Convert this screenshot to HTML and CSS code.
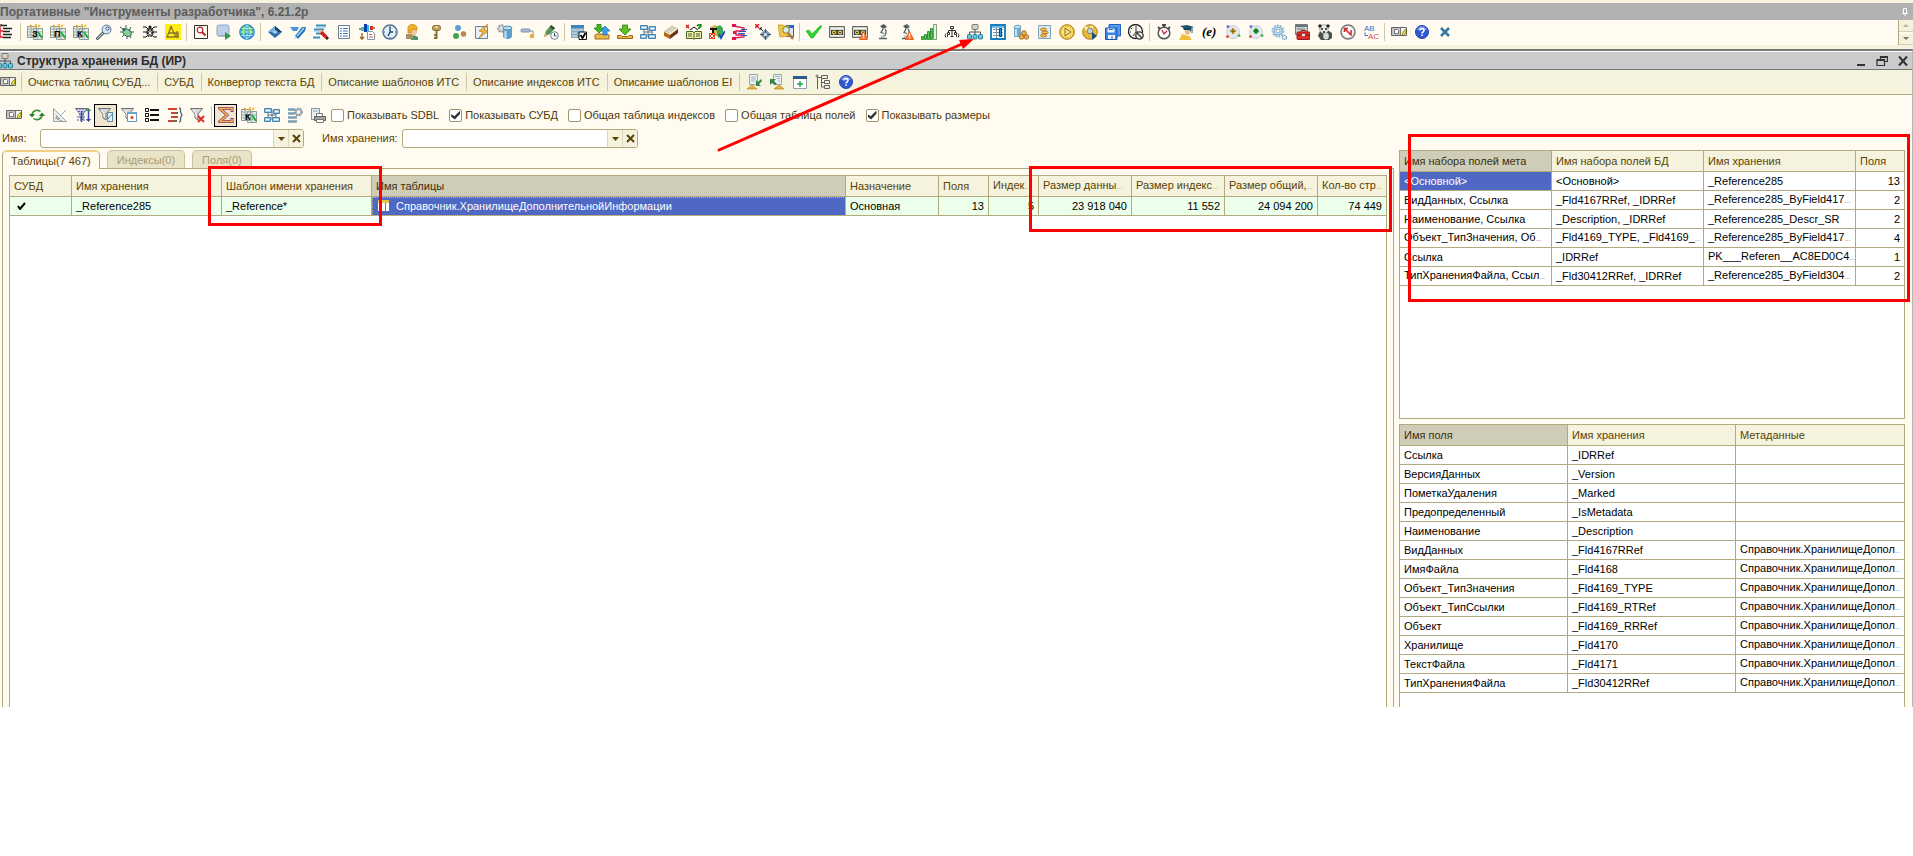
FILE: index.html
```html
<!DOCTYPE html>
<html lang="ru">
<head>
<meta charset="utf-8">
<title>Структура хранения БД (ИР)</title>
<link rel="stylesheet" href="styles.css">
</head>
<body>
<svg class="sprite" aria-hidden="true">
<symbol id="tree-list" viewBox="0 0 16 16"><path d="M4 1.500h6M6 4.500h9M6 7.500h7M6 10.500h9M6 13.500h8M4 0v2" stroke="#222" stroke-width="1.300"/><path d="M3 2v12M3 7h3M3 13h3" stroke="#e0253c" stroke-width="1.500"/></symbol>
<symbol id="grid" viewBox="0 0 16 16"><path d="M.5 2.500h9v11h-9z M6.500 4.500h9v11h-9z" fill="#e8eeea" stroke="#8d9b96"/><path d="M1 5h8M1 8h8M1 11h8M4 3v10M11 5v10M7 8h8M7 12h8" stroke="#9caaa5"/><path d="M3 1l3 2M9 0v3M13 1l-2 2" stroke="#f0a818" stroke-width="1.500"/><path d="M11 8l4 6" stroke="#19b436" stroke-width="2"/></symbol>
<symbol id="key-blue" viewBox="0 0 16 16"><path d="M1.500 14.500L8 8" stroke="#56646e" stroke-width="3" stroke-linecap="round"/><path d="M1.500 14.500L8 8" stroke="#cfdbe2" stroke-width="1"/><circle cx="10.500" cy="5.500" r="4.500" fill="#cfe2f0" stroke="#5b7c98"/><circle cx="11.500" cy="4.500" r="1.500" fill="#fff" stroke="#39566e"/></symbol>
<symbol id="bug-green" viewBox="0 0 16 16"><path d="M1 3l4 3M7 1v4M12 3l-2 4M1 8h4M15 8h-4M3 13l3-3M12 14l-2-4M8 15v-4" stroke="#30605c"/><ellipse cx="8.500" cy="8.500" rx="4.500" ry="3.300" fill="#8fce93" stroke="#2b6a55" transform="rotate(35 8 8)"/><circle cx="5" cy="5.500" r="1.500" fill="#30605c"/></symbol>
<symbol id="bug-black" viewBox="0 0 16 16"><path d="M1 3h3l2 2M15 3h-3l-2 2M1 8h4M15 8h-4M1 13h3l2-2M15 13h-3l-2-2" fill="none" stroke="#111"/><ellipse cx="8" cy="8.500" rx="3.500" ry="4.500" fill="#222"/><path d="M8 5v8M5.500 7l5 4M10.500 7l-5 4" stroke="#eee"/><circle cx="8" cy="3" r="1.500" fill="#111"/></symbol>
<symbol id="compass-yellow" viewBox="0 0 16 16"><path d="M0 0h16v16H0z" fill="#ffec17"/><path d="M6 3L2 13h11M6 3l5 10M9 9h4v5M4 9h5M12 7v7" fill="none" stroke="#857526" stroke-width="1.300"/><circle cx="6" cy="3" r="1" fill="#776513"/></symbol>
<symbol id="find-frame" viewBox="0 0 16 16"><path d="M1.500 1.500h13v13h-13z" fill="#fffaf0" stroke="#333"/><circle cx="7" cy="6" r="2.800" fill="#fff" stroke="#b4262c" stroke-width="1.200"/><path d="M9 8l3.500 3.500" stroke="#b4262c" stroke-width="2"/></symbol>
<symbol id="run-form" viewBox="0 0 16 16"><rect x="1" y="1" width="12" height="11" rx="2" fill="#bdd0e8" stroke="#8ba4c5"/><path d="M3 12h9" stroke="#90a6c3"/><path d="M9 8l6 4-6 4z" fill="#2f9a4b"/></symbol>
<symbol id="globe" viewBox="0 0 16 16"><circle cx="8" cy="8" r="7.300" fill="#2d9ed8" stroke="#167cbc"/><path d="M3 3c4-2 5 1 4 4s-3 6-5 3zM10 2c4 2 5 6 3 8s-4-1-4-3 0-3 1-5z" fill="#59c569"/><path d="M1 8h14M8 1v14M2.500 4.500h11M2.500 11.500h11M8 1C3 4 3 12 8 15M8 1c5 3 5 11 0 14" fill="none" stroke="#d5f1ff" stroke-width=".7"/></symbol>
<symbol id="diamond" viewBox="0 0 16 16"><path d="M8 2l7 6-7 6-7-6z" fill="#2f6ca5"/><path d="M8 2l7 6H8z" fill="#1b4774"/><path d="M8 2L1 8h7z" fill="#77aedb"/><path d="M8 6l3 2-3 2-3-2z" fill="#9fd2f5"/></symbol>
<symbol id="pen-blue" viewBox="0 0 16 16"><path d="M0 3h9l-2 4H3z" fill="#4a94d8"/><path d="M5 12l7-9h4l-1 4-7 8z" fill="#2674bc"/><path d="M7 12l7-8" stroke="#a9d5f6" stroke-width="1.500"/><path d="M4 15l1-3 3 3z" fill="#d7e6f3"/></symbol>
<symbol id="lines-pencil" viewBox="0 0 16 16"><path d="M3 1.500h10M1 5.500h10M3 9.500h6M0 13.500h7" stroke="#3f8ec0" stroke-width="2"/><path d="M3 3.500h10M1 7.500h8" stroke="#b9dced"/><path d="M8 8l5 5" stroke="#d51f1f" stroke-width="3.500"/><path d="M6 6l3 1-2 2z" fill="#f2c64c"/><path d="M13 13l2 2" stroke="#501010" stroke-width="3"/></symbol>
<symbol id="list-blue" viewBox="0 0 16 16"><path d="M2.500 1.500h11v13h-11z" fill="#fff" stroke="#6d7f91"/><path d="M4 4.500h2M4 7h2M4 9.500h2M4 12h2M7 4.500h5M7 7h5M7 9.500h5M7 12h5" stroke="#3c77b2"/></symbol>
<symbol id="flags" viewBox="0 0 16 16"><path d="M5 0h3v8H5z" fill="#0b3fa9"/><path d="M2 3h3v4H2zM8 1h2v6H8z" fill="#28c3e9"/><path d="M11 2h3v4h-3z" fill="#d92e2e"/><path d="M0 5h2M14 4h2M3 9v6M1 13l2 2 2-2" stroke="#9c6012" stroke-width="1.300" fill="none"/><path d="M8.500 7.500h5l2 2v6h-7z" fill="#fff" stroke="#8896a5"/><path d="M10 10.500h3M10 13h4" stroke="#d35b51"/></symbol>
<symbol id="clock" viewBox="0 0 16 16"><circle cx="8" cy="8" r="7" fill="#e1effa" stroke="#52738f" stroke-width="1.500"/><path d="M8 3v5l-2 4M8 8h3" fill="none" stroke="#1d4162" stroke-width="1.300"/><path d="M8 2v1M8 13v1M2 8h1M13 8h1" stroke="#2b5a86"/></symbol>
<symbol id="person" viewBox="0 0 16 16"><path d="M6 16v-4l3-1 4 2v3z" fill="#3c9b67"/><path d="M1 10h7v5H1z" fill="#a39465"/><path d="M5 5h7v4l-3 3-4-3z" fill="#f4c59a"/><path d="M3 9V3c2-4 9-3 9 1v2l-3-1-3 1v3z" fill="#edb420" stroke="#bb7c14" stroke-width=".7"/></symbol>
<symbol id="key-gold" viewBox="0 0 16 16"><rect x="4.500" y="1.500" width="8" height="5" rx="2" fill="#c4a150" stroke="#806833"/><path d="M8.500 7v8M8 11h-2M8 14h-2" stroke="#87713d" stroke-width="2"/><circle cx="8.500" cy="3" r="1" fill="#fff"/></symbol>
<symbol id="circles" viewBox="0 0 16 16"><circle cx="7" cy="4" r="3" fill="#5e9dd0"/><circle cx="5" cy="12" r="3" fill="#40a647"/><circle cx="12.500" cy="10" r="2.800" fill="#bb865e"/></symbol>
<symbol id="lightning" viewBox="0 0 16 16"><path d="M1.500 2.500h12v12h-12z" fill="#e7f0f6" stroke="#6b849d"/><path d="M14 0L5 7l4 1-4 6 9-7-4-1z" fill="#f5bb36" stroke="#ba711d" stroke-width=".7"/></symbol>
<symbol id="gear-db" viewBox="0 0 16 16"><circle cx="4.500" cy="4.500" r="3.300" fill="#ddd" stroke="#939393" stroke-width="2" stroke-dasharray="2 1"/><path d="M6 4v9q4.500 4 9 0V4z" fill="#5d9fcb"/><ellipse cx="10.500" cy="4" rx="4.500" ry="2" fill="#b7dcf0" stroke="#4f88ae"/><path d="M8.500 7v7" stroke="#c8e7f6" stroke-width="2"/></symbol>
<symbol id="link" viewBox="0 0 16 16"><rect x="1" y="5" width="9" height="3" rx="1" fill="#acc4db" stroke="#7391ae"/><path d="M10 7h3v4" fill="none" stroke="#8b8fa1"/><circle cx="12" cy="12" r="2.300" fill="#e5aa47"/></symbol>
<symbol id="pencil-clock" viewBox="0 0 16 16"><path d="M1 13l2-6 5-6 4 3-5 6z" fill="#579459"/><path d="M8 1l4 3-2 2-3-3z" fill="#29563a"/><path d="M1 13l1-4 3 2z" fill="#d5a86d"/><circle cx="11.500" cy="11.500" r="3.800" fill="#fff" stroke="#687d8d"/><path d="M11.500 9v3h2" fill="none" stroke="#34485b"/></symbol>
<symbol id="form-check" viewBox="0 0 16 16"><path d="M0 1h13v13H0z" fill="#83a9c3"/><path d="M0 1h13v3H0z" fill="#3e86bb"/><path d="M1 6h5M1 9h5M7 6h5M1 12h5" stroke="#deecf5"/><path d="M8 8h7.500v7.500H8z" fill="#fff" stroke="#111"/><path d="M9.500 11l2 3 3-5" stroke="#000" stroke-width="1.800" fill="none"/></symbol>
<symbol id="updown" viewBox="0 0 16 16"><path d="M1 11l2-1h10l2 1v4H1z" fill="#e9b94c" stroke="#a16a18"/><path d="M3 0h4v4h3l-5 5-5-5h3z" fill="#42b52a" stroke="#17780d" stroke-width=".7"/><path d="M11 2l5 5h-3v4H9V7H7z" fill="#3f9ce9" stroke="#1b63b6" stroke-width=".7"/></symbol>
<symbol id="download" viewBox="0 0 16 16"><path d="M.5 11.500H4l1 1h6l1-1h3.500v3H.5z" fill="#e9b94c" stroke="#a16a18"/><path d="M5.500 1h5v4H14l-6 6-6-6h3.500z" fill="#5ac31d" stroke="#278010" stroke-width=".8"/></symbol>
<symbol id="nodes" viewBox="0 0 16 16"><path d="M4 3v10M12 4v9M4 8h8M8 3v10" stroke="#5c7384"/><path d="M.5 1.500h7v4h-7zM9.500 2.500h6v4h-6zM.5 10.500h6v4h-6zM8.500 10.500h7v4h-7z" fill="#9ecaec" stroke="#4383ae"/><path d="M2 3.500h4M11 4.500h3M2 12.500h3M10 12.500h4" stroke="#fff"/></symbol>
<symbol id="book" viewBox="0 0 16 16"><path d="M1 8L9 2l6 3-7 7z" fill="#f5ead1" stroke="#ad9a78" stroke-width=".6"/><path d="M3 8l7-5M5 9l7-5" stroke="#b4b4ad"/><path d="M1 8l6 3v4l-6-3z" fill="#b46b1c"/><path d="M7 11l8-6v4l-8 6z" fill="#6b3716"/></symbol>
<symbol id="book-test" viewBox="0 0 16 16"><path d="M0 1l3 3M3 1L0 4" stroke="#d91919" stroke-width="1.300"/><path d="M4 6l4-3 4 3" fill="none" stroke="#111"/><path d="M11 2q4-3 4 0l-2 2v1" fill="none" stroke="#13871b" stroke-width="1.800"/><path d="M.5 7.500H7l1 1 1-1h6.500v7H9l-1 1-1-1H.5z" fill="#f2f0b1" stroke="#4a6122"/><path d="M8 8v7M2 10h4M10 10h4M2 12h4M10 12h4" stroke="#4a6122"/></symbol>
<symbol id="books" viewBox="0 0 16 16"><path d="M1 3l5-2 3 2v9H3V6z" fill="#dcb349"/><path d="M7 3l4-2 3 3v8l-5 2z" fill="#3daa58"/><path d="M1 5h7M4 5v6" stroke="#111" stroke-width="2"/><path d="M0 9h6v6H0z" fill="#e44822"/><path d="M1 10l4 4M5 10l-4 4" stroke="#fff"/><path d="M10 10l2 4 4-7" fill="none" stroke="#2144c2" stroke-width="1.800"/></symbol>
<symbol id="branch" viewBox="0 0 16 16"><path d="M2 2l10 2v3H4v4h8v2L2 14" fill="none" stroke="#df174f" stroke-width="1.300"/><path d="M0 0h4v3H0zM0 13h4v3H0zM1 7h3v3H1z" fill="#e41150"/><path d="M7 7.500h7M6 9.500h7M9 5.500h6M9 11.500h6" stroke="#275abe"/></symbol>
<symbol id="x-diamond" viewBox="0 0 16 16"><path d="M0 0l4 4M4 0L0 4" stroke="#e71919" stroke-width="1.500"/><path d="M5 4l3 3M5 6V4h2" stroke="#111" fill="none"/><path d="M10.500 5l5.500 5.500-5.500 5.500L5 10.500z" fill="#7994ac"/><path d="M10.500 5v11M5 10.500h11" stroke="#32546f"/><circle cx="10.500" cy="10.500" r="1.500" fill="#e4edf4"/></symbol>
<symbol id="folder-zoom" viewBox="0 0 16 16"><path d="M8 1h8v12H8z" fill="#2063cd"/><path d="M9 4h6v8H9z" fill="#d5e7f8"/><path d="M0 1h5l1 1h5v10l-9 1z" fill="#f0c845" stroke="#bc8720" stroke-width=".7"/><circle cx="8" cy="6" r="3.300" fill="#d4eff2" stroke="#987421"/><path d="M10 9l5 6" stroke="#b27927" stroke-width="2.500"/></symbol>
<symbol id="check" viewBox="0 0 16 16"><path d="M0 7l3-1 3 4 8-8h2L7 14H5z" fill="#29d72c" stroke="#19a51e" stroke-width=".6"/></symbol>
<symbol id="tape" viewBox="0 0 16 16"><path d="M.5 2.500h15v11H.5z" fill="#d2d2ca" stroke="#666"/><path d="M2 4.500h12M2 11.500h12" stroke="#f5f5ee"/><path d="M2 6h12v5H2z" fill="#444"/><circle cx="5" cy="8.500" r="2" fill="#f0dd4b"/><circle cx="11" cy="8.500" r="2" fill="#f0dd4b"/><circle cx="5" cy="8.500" r=".8"/><circle cx="11" cy="8.500" r=".8"/></symbol>
<symbol id="warn" viewBox="0 0 16 16"><path d="M11.500 7.500l4 8h-8z" fill="#f57c3a" stroke="#e0602a"/><path d="M11.500 9.500v3M11.500 13.500v1" stroke="#fff3bd" stroke-width="1.500"/></symbol>
<symbol id="microscope" viewBox="0 0 16 16"><path d="M5 2l4-2 3 3-4 2z" fill="#515d60"/><path d="M8 5L6 8.500l3 1M10 5c2 2 1 6-1 7.500H6M4 14.500h8" fill="none" stroke="#566366" stroke-width="1.300"/><path d="M6 12.500h4" stroke="#c0cbce"/></symbol>
<symbol id="bars" viewBox="0 0 16 16"><path d="M.5 12.500h2v3h-2zM3.500 10.500h2v5h-2zM6.500 7.500h2v8h-2zM9.500 4.500h2v11h-2z" fill="#65c457" stroke="#32953a"/><path d="M12.500 .5h3v15h-3z" fill="#e8f4e3" stroke="#7f9f7a"/></symbol>
<symbol id="hierarchy" viewBox="0 0 16 16"><path d="M6.500 2.500h3v2h-3zM3.500 8.500h2v2h-2zM10.500 8.500h2v2h-2zM8 5v7M4.500 8V6.500h7V8M6.500 12.500h3M3.500 13V11M12.500 13V11M2 9.500q-2 2 0 4M14 9.500q2 2 0 4" fill="none" stroke="#333"/></symbol>
<symbol id="structure" viewBox="0 0 16 16"><path d="M8 6v4M2.500 11V8h11v3" fill="none" stroke="#4b555c"/><rect x="5" y=".5" width="6" height="5" rx="1" fill="#d8d2c3" stroke="#7b7768"/><rect x=".5" y="10.500" width="4" height="4.500" rx="1" fill="#67c7de" stroke="#217f9a"/><rect x="6" y="10.500" width="4" height="4.500" rx="1" fill="#67c7de" stroke="#217f9a"/><rect x="11.500" y="10.500" width="4" height="4.500" rx="1" fill="#67c7de" stroke="#217f9a"/></symbol>
<symbol id="table" viewBox="0 0 16 16"><path d="M1 1h14v14H1z" fill="#fff" stroke="#147dbe" stroke-width="1.800"/><path d="M2 3h12" stroke="#76bee9" stroke-width="2"/><path d="M3 5.500h10M3 8.500h10M3 11.500h10M6.500 4v10" stroke="#7296b1"/><path d="M9.500 4.500h2v8h-2z" fill="#3692d5" stroke="#173b74"/></symbol>
<symbol id="db-coins" viewBox="0 0 16 16"><path d="M1 3h7v10H1z" fill="#75a9cb"/><path d="M3 4v8" stroke="#cbe3f1" stroke-width="2"/><ellipse cx="4.500" cy="3" rx="3.500" ry="1.800" fill="#c5dcea" stroke="#6c9cbb"/><circle cx="11" cy="9" r="2.300" fill="#edb44c" stroke="#ab6c26"/><circle cx="8.500" cy="13" r="2.300" fill="#edb44c" stroke="#ab6c26"/><circle cx="13.500" cy="13" r="2.200" fill="#edb44c" stroke="#ab6c26"/></symbol>
<symbol id="coins" viewBox="0 0 16 16"><path d="M2.500 1.500h12v13h-12z" fill="#dbeaf3" stroke="#81a0b4"/><ellipse cx="7.500" cy="5.500" rx="3" ry="1.500" fill="#f4c64e" stroke="#b37623"/><ellipse cx="9" cy="8.500" rx="3" ry="1.500" fill="#f4c64e" stroke="#b37623"/><ellipse cx="7.500" cy="11.500" rx="3" ry="1.500" fill="#f4c64e" stroke="#b37623"/></symbol>
<symbol id="play" viewBox="0 0 16 16"><circle cx="8" cy="8" r="7.300" fill="#edc53f" stroke="#a67c20"/><circle cx="8" cy="8" r="5.500" fill="#f9df75"/><path d="M6 4l6 4-6 4z" fill="#f6de8b" stroke="#927022"/></symbol>
<symbol id="play-cd" viewBox="0 0 16 16"><circle cx="8" cy="8" r="7.300" fill="#e9b93b" stroke="#a67c20"/><path d="M8 8L3 3M8 8l2-6" stroke="#fff0a1" stroke-width="3"/><circle cx="8" cy="7" r="2.800" fill="#c1d4d5" stroke="#7f8a70"/><path d="M10 8l5 4-5 4z" fill="#15557b"/></symbol>
<symbol id="floppy" viewBox="0 0 16 16"><path d="M4 .5h11.500V12H4z" fill="#529ded" stroke="#2264b8"/><path d="M.5 4H12v11.500H.5z" fill="#3e82ea" stroke="#2856a9"/><path d="M2.500 4.500h7v4h-7zM3 11h7v4H3z" fill="#eaf3ff"/><path d="M4 5.500h4M7 12v3" stroke="#39699e"/></symbol>
<symbol id="clock-no" viewBox="0 0 16 16"><circle cx="7.500" cy="7.500" r="7" fill="#faf9f2" stroke="#222" stroke-width="1.300"/><path d="M8 2v6l-3 4M8 8h2M2 8h1M3 4l1 1" fill="none" stroke="#333"/><circle cx="11.500" cy="11.500" r="3.700" fill="#eee" stroke="#333" stroke-width="1.300"/><path d="M9 9l5 5" stroke="#333" stroke-width="1.300"/></symbol>
<symbol id="stopwatch" viewBox="0 0 16 16"><path d="M6 1h4M8 1v3M2 3l2 2M14 3l-2 2" stroke="#4a4a4a" stroke-width="2"/><circle cx="8" cy="9" r="5.800" fill="#fff" stroke="#555" stroke-width="1.500"/><path d="M6 6l2 4 3-3" fill="none" stroke="#d21b2b" stroke-width="1.300"/></symbol>
<symbol id="graduate" viewBox="0 0 16 16"><path d="M1 2l7-1 7 2-7 3z" fill="#205270"/><path d="M4 4h8v3l-2 1-5-2z" fill="#17455f"/><path d="M6 6h5v3l-2 3-3-3z" fill="#f0b57f"/><path d="M0 16l3-6 4 1 3 1 3 4z" fill="#f2be35"/><path d="M13 4v5" stroke="#215479"/><path d="M6 10l2 2 2-2" stroke="#fff" fill="none"/></symbol>
<symbol id="orbit" viewBox="0 0 16 16"><circle cx="8" cy="8" r="6.500" fill="#e4e7ec" stroke="#cbd0d8"/><circle cx="3" cy="2.500" r="1.500" fill="#6e76d3"/><circle cx="2.500" cy="12.500" r="1.500" fill="#df5140"/><circle cx="14" cy="11.500" r="1.500" fill="#49b56a"/></symbol>
<symbol id="gears" viewBox="0 0 16 16"><circle cx="7" cy="7" r="5.500" fill="#e5f1f8" stroke="#91b9d3" stroke-width="2" stroke-dasharray="2 1"/><circle cx="7" cy="7" r="4" fill="#d2e6f3" stroke="#80aaca"/><circle cx="7" cy="7" r="2" fill="#fffaf0" stroke="#80aaca"/><circle cx="13.500" cy="13.500" r="2" fill="#fffaf0" stroke="#74a9cb" stroke-width="1.500" stroke-dasharray="1.500 .5"/></symbol>
<symbol id="toolbox" viewBox="0 0 16 16"><path d="M1.500 .5h12v10h-12z" fill="#cfd2d4" stroke="#767c80"/><path d="M1 2h12" stroke="#66747e" stroke-width="2"/><path d="M3 5h8" stroke="#777"/><path d="M7 8V6.500h5V8" fill="none" stroke="#922"/><rect x="3" y="8" width="13" height="7.500" rx="1" fill="#d9332d" stroke="#9e1919"/><path d="M3 11h13" stroke="#7d1919"/><path d="M8 10h3v2H8z" fill="#eee"/></symbol>
<symbol id="panda" viewBox="0 0 16 16"><path d="M3 7h9l3 2v5l-3 2H4l-3-4z" fill="#4b504c"/><ellipse cx="9" cy="12" rx="2.800" ry="3.500" fill="#d7dcd5"/><circle cx="7" cy="5" r="4.300" fill="#e9ece5" stroke="#aaa"/><circle cx="3" cy="2" r="1.700" fill="#222"/><circle cx="11" cy="2" r="1.700" fill="#222"/><path d="M5 4v2M9 4v2M6 8h2" stroke="#222" stroke-width="1.500"/></symbol>
<symbol id="compass" viewBox="0 0 16 16"><circle cx="8" cy="8" r="7" fill="#fff" stroke="#777" stroke-width="1.500"/><circle cx="8" cy="8" r="5.300" fill="none" stroke="#bbb" stroke-dasharray="1 1"/><path d="M4.500 4.500l7 7M4.500 8V4.500H8M11 6v5.500" fill="none" stroke="#d62828" stroke-width="1.600"/></symbol>
<symbol id="panel-edit" viewBox="0 0 16 16"><path d="M.5 3.500h15v8H.5z" fill="#c3c3c3" stroke="#666"/><path d="M3.500 5.500h3l1 1v3h-4z" fill="#fff" stroke="#777"/><path d="M9 4h6v7H9z" fill="#f2f2f2"/><path d="M9.500 4v7" stroke="#777"/><path d="M11 12l1-4 3-3v4z" fill="#f5ec23" stroke="#65611a" stroke-width=".7"/></symbol>
<symbol id="help" viewBox="0 0 16 16"><circle cx="8" cy="8" r="6.500" fill="#3158cf" stroke="#2445ae"/><path d="M3 6c1-5 8-5 10 0" fill="#6f98f1"/><path d="M6 6.500c0-3 4-2.500 4 0 0 1.500-2 1.500-2 3M8 10.500v1.500" fill="none" stroke="#fff" stroke-width="1.600"/></symbol>
<symbol id="close-blue" viewBox="0 0 16 16"><path d="M4 4l8 8M12 4l-8 8" stroke="#357ca5" stroke-width="2.600"/></symbol>
<symbol id="import" viewBox="0 0 16 16"><path d="M3.500 .5h8v10h-8z" fill="#eef2f5" stroke="#9aa8b1"/><path d="M5 3h5M5 5h5M5 7h4" stroke="#a2afba"/><path d="M1 15l5-4 5 4z" fill="#e4b63d" stroke="#b98624" stroke-width=".7"/><path d="M15 5l-3 3-2-2v6h5l-2-2 3-3z" fill="#338546"/></symbol>
<symbol id="export" viewBox="0 0 16 16"><path d="M4.500 .5h8v10h-8z" fill="#eef2f5" stroke="#9aa8b1"/><path d="M6 2.500h5M8 4.500h3M9 7h2" stroke="#a2afba"/><path d="M5 15l5-4 5 4z" fill="#e4b63d" stroke="#b98624" stroke-width=".7"/><path d="M1 5h6L5 7l3 3-2 1-3-2-2 2z" fill="#338546"/></symbol>
<symbol id="window-plus" viewBox="0 0 16 16"><path d="M1.500 2.500h13v12h-13z" fill="#fff" stroke="#8c9fab"/><path d="M1 2h14v3H1z" fill="#2b5c83"/><path d="M8 7v6M5 10h6" stroke="#19a448" stroke-width="1.500"/></symbol>
<symbol id="tree-docs" viewBox="0 0 16 16"><path d="M2.500 1v14M2 3.500h4M6.500 1.500h6v3h-6zM6 8.500h3M9.500 6.500h5v3h-5zM6.500 5v8h3M9.500 11.500h5v3h-5z" fill="none" stroke="#5b6260"/><circle cx="2" cy="2" r="1.500" fill="#888"/></symbol>
<symbol id="refresh" viewBox="0 0 16 16"><path d="M3 7.500c1-4.500 6-5 8.500-3M13 8.500c-1 4.500-6 5-8.500 3" fill="none" stroke="#3c9138" stroke-width="1.600"/><path d="M0 7h6l-3 3.500zM10 9h6l-3-3.500z" fill="#287f29"/></symbol>
<symbol id="triangle" viewBox="0 0 16 16"><path d="M1.500 1.500v13h13zM4.500 8.500v3h3z" fill="#eef0ee" stroke="#9aa2a2"/><path d="M3 11l7 3M8 9L14 3" stroke="#9aa2a2"/></symbol>
<symbol id="funnel" viewBox="0 0 16 16"><path d="M.5 1.500h12L8 7v6l-3-2V7z" fill="#d6dbda" stroke="#6a7270"/><path d="M3 3l3 4v3" stroke="#fff" fill="none"/></symbol>
<symbol id="list-black" viewBox="0 0 16 16"><path d="M1.500 1.500h3v3h-3zM1.500 6.500h3v3h-3zM1.500 11.500h3v3h-3z" fill="#fff" stroke="#111"/><path d="M6 3h9M6 8h9M6 13h9" stroke="#111" stroke-width="2"/></symbol>
<symbol id="group-lines" viewBox="0 0 16 16"><path d="M1 2h9M4 10h7" stroke="#d84329" stroke-width="2"/><path d="M4 6h7M1 14h9" stroke="#333" stroke-width="1.500"/><path d="M4 6h5M1 14h6" stroke="#d84329" stroke-width="1.500"/><path d="M12 1q2 0 1.500 4L15 8l-1.500 3q.5 4-1.500 4" fill="none" stroke="#49616f" stroke-width="1.300"/></symbol>
<symbol id="sigma" viewBox="0 0 16 16"><path d="M14 5V1.500H2L9 8l-7 6.500h12V11" fill="none" stroke="#8c3b79" stroke-width="3"/><path d="M14 4V1.500H2L9 8l-7 6.500h12V12" fill="none" stroke="#f2b348" stroke-width="1.700"/></symbol>
<symbol id="list-gear" viewBox="0 0 16 16"><path d="M1 2.500h7M1 6.500h7M1 10.500h9M1 14.500h9" stroke="#7b9fb8" stroke-width="2.500"/><circle cx="11.500" cy="5" r="3" fill="#fff" stroke="#8f989e" stroke-width="2.500" stroke-dasharray="2 .5"/></symbol>
<symbol id="print" viewBox="0 0 16 16"><path d="M1.500 1.500h8v11h-8z" fill="#e8f0f4" stroke="#7895a9"/><path d="M3 4h5" stroke="#77a8c7"/><path d="M6.500 6.500h6v3h-6z" fill="#fff" stroke="#777"/><path d="M4.500 9.500h11v4h-11z" fill="#aaa49d" stroke="#625d58"/><path d="M6.500 12.500h7v3h-7z" fill="#fff" stroke="#777"/></symbol>
<symbol id="window-red" viewBox="0 0 16 16"><path d="M6.500 5.500h9v9h-9z" fill="#fff" stroke="#6698b9"/><path d="M6 5h10v2H6z" fill="#67a9d4"/><circle cx="11" cy="10.500" r="1.500" fill="#ef3a20"/></symbol>
</svg>

<main class="app">
<header class="panel-title"><span>Портативные "Инструменты разработчика", 6.21.2р</span>
<button class="pin" aria-label="Закрепить"><svg viewBox="0 0 8 10"><path d="M2.500 1.500h3v5h-3zM1 6.500h6M4 6v3" fill="none" stroke="#fff"/></svg></button></header>

<div class="tools-row">
<nav class="tools" aria-label="Инструменты">
<button class="ico first" aria-label="Дерево"><svg><use href="#tree-list"/></svg></button><i class="sep"></i>
<button class="ico" aria-label="Консоль запросов"><svg><use href="#grid"/><text class="glyph" x="5" y="13">З</text></svg></button>
<button class="ico" aria-label="Подбор"><svg><use href="#grid"/><text class="glyph" x="4" y="13">П</text></svg></button>
<button class="ico" aria-label="Консоль"><svg><use href="#grid"/><text class="glyph" x="4" y="13">К</text></svg></button>
<button class="ico" aria-label="Ключ"><svg><use href="#key-blue"/></svg></button>
<button class="ico" aria-label="Отладка"><svg><use href="#bug-green"/></svg></button>
<button class="ico" aria-label="Ошибки"><svg><use href="#bug-black"/></svg></button>
<button class="ico" aria-label="Конструктор"><svg><use href="#compass-yellow"/></svg></button><i class="sep"></i>
<button class="ico" aria-label="Поиск"><svg><use href="#find-frame"/></svg></button>
<button class="ico" aria-label="Открыть форму"><svg><use href="#run-form"/></svg></button>
<button class="ico" aria-label="Глобус"><svg><use href="#globe"/></svg></button><i class="sep"></i>
<button class="ico" aria-label="Объект"><svg><use href="#diamond"/></svg></button>
<button class="ico" aria-label="Редактор"><svg><use href="#pen-blue"/></svg></button>
<button class="ico" aria-label="Редактор строк"><svg><use href="#lines-pencil"/></svg></button>
<button class="ico" aria-label="Список"><svg><use href="#list-blue"/></svg></button>
<button class="ico" aria-label="Обмен"><svg><use href="#flags"/></svg></button>
<button class="ico" aria-label="Задания"><svg><use href="#clock"/></svg></button>
<button class="ico" aria-label="Пользователи"><svg><use href="#person"/></svg></button>
<button class="ico" aria-label="Права"><svg><use href="#key-gold"/></svg></button>
<button class="ico" aria-label="Роли"><svg><use href="#circles"/></svg></button>
<button class="ico" aria-label="События"><svg><use href="#lightning"/></svg></button>
<button class="ico" aria-label="База данных"><svg><use href="#gear-db"/></svg></button>
<button class="ico" aria-label="Подписки"><svg><use href="#link"/></svg></button>
<button class="ico" aria-label="Журнал"><svg><use href="#pencil-clock"/></svg></button><i class="sep"></i>
<button class="ico" aria-label="Обработка"><svg><use href="#form-check"/></svg></button>
<button class="ico" aria-label="Выгрузка и загрузка"><svg><use href="#updown"/></svg></button>
<button class="ico" aria-label="Загрузка"><svg><use href="#download"/></svg></button>
<button class="ico" aria-label="Связи"><svg><use href="#nodes"/></svg></button>
<button class="ico" aria-label="Книга"><svg><use href="#book"/></svg></button>
<button class="ico" aria-label="Проверка"><svg><use href="#book-test"/></svg></button>
<button class="ico" aria-label="Сравнение"><svg><use href="#books"/></svg></button>
<button class="ico" aria-label="Ветвление"><svg><use href="#branch"/></svg></button>
<button class="ico" aria-label="Удаление объекта"><svg><use href="#x-diamond"/></svg></button>
<button class="ico" aria-label="Поиск файлов"><svg><use href="#folder-zoom"/></svg></button><i class="sep"></i>
<button class="ico" aria-label="Проверить"><svg><use href="#check"/></svg></button>
<button class="ico" aria-label="Трасса"><svg><use href="#tape"/></svg></button>
<button class="ico" aria-label="Трасса ошибок"><svg><use href="#tape"/><use href="#warn"/></svg></button>
<button class="ico" aria-label="Анализ"><svg><use href="#microscope"/></svg></button>
<button class="ico" aria-label="Анализ ошибок"><svg><use href="#microscope"/><use href="#warn"/></svg></button>
<button class="ico" aria-label="Показатели"><svg><use href="#bars"/></svg></button>
<button class="ico" aria-label="Иерархия"><svg><use href="#hierarchy"/></svg></button>
<button class="ico" aria-label="Структура хранения БД"><svg><use href="#structure"/></svg></button>
<button class="ico" aria-label="Таблица"><svg><use href="#table"/></svg></button>
<button class="ico" aria-label="Размеры базы"><svg><use href="#db-coins"/></svg></button>
<button class="ico" aria-label="Стоимость"><svg><use href="#coins"/></svg></button>
<button class="ico" aria-label="Выполнить"><svg><use href="#play"/></svg></button>
<button class="ico" aria-label="Запустить"><svg><use href="#play-cd"/></svg></button>
<button class="ico" aria-label="Сохранить"><svg><use href="#floppy"/></svg></button>
<button class="ico" aria-label="Блокировка"><svg><use href="#clock-no"/></svg></button><i class="sep"></i>
<button class="ico" aria-label="Секундомер"><svg><use href="#stopwatch"/></svg></button>
<button class="ico" aria-label="Обучение"><svg><use href="#graduate"/></svg></button>
<button class="ico" aria-label="Выражение"><svg><text class="expr" x="0" y="12">(e)</text></svg></button>
<button class="ico" aria-label="Модуль"><svg><use href="#orbit"/><circle cx="8" cy="7" r="2.500" fill="#f0c91e"/><path d="M8 4v6M5 7h6" stroke="#664b14"/></svg></button>
<button class="ico" aria-label="Сервис"><svg><use href="#orbit"/><circle cx="8" cy="7" r="2.500" fill="#25bb39"/><path d="M8 4v6M5 7h6" stroke="#12591c"/></svg></button>
<button class="ico" aria-label="Параметры"><svg><use href="#gears"/></svg></button>
<button class="ico" aria-label="Набор инструментов"><svg><use href="#toolbox"/></svg></button>
<button class="ico" aria-label="Панда"><svg><use href="#panda"/></svg></button>
<button class="ico" aria-label="Навигация"><svg><use href="#compass"/></svg></button>
<button class="ico" aria-label="Замена"><svg><text class="ab" x="1" y="7" fill="#3e6ec0">AB</text><text class="ab" x="5" y="15" fill="#d34a55">AC</text><path d="M2 8.500v3h3" fill="none" stroke="#3e6ec0"/></svg></button><i class="sep"></i>
<button class="ico" aria-label="Настройка панели"><svg><use href="#panel-edit"/></svg></button>
<button class="ico" aria-label="Справка"><svg><use href="#help"/></svg></button>
<button class="ico" aria-label="Закрыть панель"><svg><use href="#close-blue"/></svg></button>
</nav>
<div class="spinner"><button aria-label="Вверх"><svg viewBox="0 0 8 5"><path d="M1 4l3-3 3 3z" fill="#bdb89d"/></svg></button><button aria-label="Вниз"><svg viewBox="0 0 8 5"><path d="M1 1l3 3 3-3z" fill="#777668"/></svg></button></div>
</div>

<section class="window">
<header class="window-title"><svg class="i16"><use href="#structure"/></svg><h1>Структура хранения БД (ИР)</h1>
<div class="win-buttons"><button aria-label="Свернуть"><svg viewBox="0 0 12 12"><path d="M2 10h8" stroke="#333" stroke-width="2"/></svg></button><button aria-label="Восстановить"><svg viewBox="0 0 12 12"><path d="M4.500 4V1.500h7v5H9M1 4.500h7.500v6H1z" fill="none" stroke="#333" stroke-width="1.200"/><path d="M1 5h7M4 2h7" stroke="#333" stroke-width="2"/></svg></button><button aria-label="Закрыть"><svg viewBox="0 0 12 12"><path d="M2 1.500l8 9M10 1.500l-8 9" stroke="#333" stroke-width="2"/></svg></button></div>
</header>

<nav class="commands" aria-label="Команды">
<button class="ico first" aria-label="Настройка"><svg><use href="#panel-edit"/></svg></button><i class="sep thin"></i>
<button class="cmd">Очистка таблиц СУБД...</button><i class="sep thin"></i>
<button class="cmd">СУБД</button><i class="sep thin"></i>
<button class="cmd">Конвертор текста БД</button><i class="sep thin"></i>
<button class="cmd">Описание шаблонов ИТС</button><i class="sep thin"></i>
<button class="cmd">Описание индексов ИТС</button><i class="sep thin"></i>
<button class="cmd">Описание шаблонов EI</button><i class="sep thin"></i>
<button class="ico" aria-label="Загрузить настройки"><svg><use href="#import"/></svg></button>
<button class="ico" aria-label="Сохранить настройки"><svg><use href="#export"/></svg></button>
<button class="ico" aria-label="Новое окно"><svg><use href="#window-plus"/></svg></button>
<button class="ico" aria-label="Структура формы"><svg><use href="#tree-docs"/></svg></button>
<button class="ico" aria-label="Справка"><svg><use href="#help"/></svg></button>
</nav>

<div class="workspace">
<section class="left">
<div class="options">
<button class="ico" aria-label="Настройка списка"><svg><use href="#panel-edit"/></svg></button>
<button class="ico" aria-label="Обновить"><svg><use href="#refresh"/></svg></button>
<button class="ico" aria-label="Конструктор"><svg><use href="#triangle"/></svg></button>
<button class="ico" aria-label="Отбор и сортировка"><svg><use href="#funnel"/><path d="M1 2h10M3 4.500h7M4 7h5M2 10h8M2 13h8" stroke="#4e59ba" stroke-dasharray="2 1"/><path d="M6.500 4v11M13.500 2v12" stroke="#3744b2" stroke-width="1.500"/><path d="M11 4l2.500-3L16 4z" fill="#1d9a38"/><path d="M11 12l2.500 3 2.500-3z" fill="#2944b8"/></svg></button>
<button class="ico pressed" aria-label="Отбор"><svg><use href="#funnel"/><path d="M9.500 5.500h5v9h-5z" fill="#e3f1f9" stroke="#5d8daa"/><path d="M10 12l4-5" stroke="#3e84aa"/></svg></button>
<button class="ico" aria-label="Отбор по значению"><svg><use href="#funnel"/><use href="#window-red"/></svg></button>
<button class="ico" aria-label="Настройка колонок"><svg><use href="#list-black"/></svg></button>
<button class="ico" aria-label="Группировка"><svg><use href="#group-lines"/></svg></button>
<button class="ico" aria-label="Отключить отбор"><svg><use href="#funnel"/><path d="M8 9l6 6M14 9l-6 6" stroke="#d9302a" stroke-width="2"/></svg></button><i class="sep"></i>
<button class="ico pressed" aria-label="Итоги"><svg><use href="#sigma"/></svg></button>
<button class="ico" aria-label="Консоль запросов"><svg><use href="#grid"/><text class="glyph" x="4" y="13">К</text></svg></button>
<button class="ico" aria-label="Связи таблиц"><svg><use href="#nodes"/></svg></button>
<button class="ico" aria-label="Параметры списка"><svg><use href="#list-gear"/></svg></button>
<button class="ico" aria-label="Печать"><svg><use href="#print"/></svg></button>
<div class="ticks">
<label class="tick"><input type="checkbox">Показывать SDBL</label>
<label class="tick"><input type="checkbox" checked>Показывать СУБД</label>
<label class="tick"><input type="checkbox">Общая таблица индексов</label>
<label class="tick"><input type="checkbox">Общая таблица полей</label>
<label class="tick"><input type="checkbox" checked>Показывать размеры</label>
</div>
</div>
<div class="filters">
<label for="name">Имя:</label>
<div class="combo wide"><input id="name" type="text"><button aria-label="Выбрать имя"><svg viewBox="0 0 9 9"><path d="M1 3h7L4.500 7z" fill="#594304"/></svg></button><button aria-label="Очистить имя"><svg viewBox="0 0 9 9"><path d="M1 1l7 7M8 1L1 8" stroke="#594304" stroke-width="2"/></svg></button></div>
<label for="stored">Имя хранения:</label>
<div class="combo"><input id="stored" type="text"><button aria-label="Выбрать имя хранения"><svg viewBox="0 0 9 9"><path d="M1 3h7L4.500 7z" fill="#594304"/></svg></button><button aria-label="Очистить имя хранения"><svg viewBox="0 0 9 9"><path d="M1 1l7 7M8 1L1 8" stroke="#594304" stroke-width="2"/></svg></button></div>
</div>
<div class="tabs" role="tablist">
<button class="tab active" role="tab" aria-selected="true">Таблицы(7 467)</button>
<button class="tab" role="tab" aria-selected="false">Индексы(0)</button>
<button class="tab" role="tab" aria-selected="false">Поля(0)</button>
</div>
<div class="tab-page">
<div class="table-box open">
<table class="main-table">
<colgroup><col class="c-db"><col class="c-name"><col class="c-name"><col><col class="c-size"><col class="c-num"><col class="c-num"><col class="c-size"><col class="c-size"><col class="c-size"><col class="c-rows"></colgroup>
<thead><tr><th>СУБД</th><th>Имя хранения</th><th>Шаблон имени хранения</th><th class="current">Имя таблицы</th><th>Назначение</th><th>Поля</th><th>Индек<span class="more">…</span></th><th>Размер данны<span class="more">…</span></th><th>Размер индекс<span class="more">…</span></th><th>Размер общий,<span class="more">…</span></th><th>Кол-во стр<span class="more">…</span></th></tr></thead>
<tbody><tr><td><svg class="mark" viewBox="0 0 9 8" aria-label="Да"><path d="M1 4l2 3 5-6" fill="none" stroke="#000" stroke-width="2"/></svg></td><td>_Reference285</td><td>_Reference*</td><td class="selected"><svg class="row-icon" viewBox="0 0 11 11" aria-hidden="true"><path d="M0 0h11v11H0z" fill="#fff"/><path d="M0 0h11v3H0z" fill="#edc54d"/><path d="M3.500 3v8M7.500 3v8" stroke="#778"/></svg>Справочник.ХранилищеДополнительнойИнформации</td><td>Основная</td><td class="num">13</td><td class="num">5</td><td class="num">23 918 040</td><td class="num">11 552</td><td class="num">24 094 200</td><td class="num">74 449</td></tr></tbody>
</table>
</div>
</div>
</section>

<aside class="right">
<div class="table-box sets">
<table>
<colgroup><col><col><col><col class="c-fields"></colgroup>
<thead><tr><th class="current">Имя набора полей мета</th><th>Имя набора полей БД</th><th>Имя хранения</th><th>Поля</th></tr></thead>
<tbody>
<tr><td class="selected">&lt;Основной&gt;</td><td>&lt;Основной&gt;</td><td>_Reference285</td><td class="num">13</td></tr>
<tr><td>ВидДанных, Ссылка</td><td>_Fld4167RRef, _IDRRef</td><td>_Reference285_ByField417<span class="more">…</span></td><td class="num">2</td></tr>
<tr><td>Наименование, Ссылка</td><td>_Description, _IDRRef</td><td>_Reference285_Descr_SR</td><td class="num">2</td></tr>
<tr><td>Объект_ТипЗначения, Об<span class="more">…</span></td><td>_Fld4169_TYPE, _Fld4169_<span class="more">…</span></td><td>_Reference285_ByField417<span class="more">…</span></td><td class="num">4</td></tr>
<tr><td>Ссылка</td><td>_IDRRef</td><td>PK___Referen__AC8ED0C4<span class="more">…</span></td><td class="num">1</td></tr>
<tr><td>ТипХраненияФайла, Ссыл<span class="more">…</span></td><td>_Fld30412RRef, _IDRRef</td><td>_Reference285_ByField304<span class="more">…</span></td><td class="num">2</td></tr>
</tbody></table>
</div>
<div class="table-box open">
<table>
<thead><tr><th class="current">Имя поля</th><th>Имя хранения</th><th>Метаданные</th></tr></thead>
<tbody>
<tr><td>Ссылка</td><td>_IDRRef</td><td></td></tr>
<tr><td>ВерсияДанных</td><td>_Version</td><td></td></tr>
<tr><td>ПометкаУдаления</td><td>_Marked</td><td></td></tr>
<tr><td>Предопределенный</td><td>_IsMetadata</td><td></td></tr>
<tr><td>Наименование</td><td>_Description</td><td></td></tr>
<tr><td>ВидДанных</td><td>_Fld4167RRef</td><td>Справочник.ХранилищеДопол<span class="more">…</span></td></tr>
<tr><td>ИмяФайла</td><td>_Fld4168</td><td>Справочник.ХранилищеДопол<span class="more">…</span></td></tr>
<tr><td>Объект_ТипЗначения</td><td>_Fld4169_TYPE</td><td>Справочник.ХранилищеДопол<span class="more">…</span></td></tr>
<tr><td>Объект_ТипСсылки</td><td>_Fld4169_RTRef</td><td>Справочник.ХранилищеДопол<span class="more">…</span></td></tr>
<tr><td>Объект</td><td>_Fld4169_RRRef</td><td>Справочник.ХранилищеДопол<span class="more">…</span></td></tr>
<tr><td>Хранилище</td><td>_Fld4170</td><td>Справочник.ХранилищеДопол<span class="more">…</span></td></tr>
<tr><td>ТекстФайла</td><td>_Fld4171</td><td>Справочник.ХранилищеДопол<span class="more">…</span></td></tr>
<tr><td>ТипХраненияФайла</td><td>_Fld30412RRef</td><td>Справочник.ХранилищеДопол<span class="more">…</span></td></tr>
</tbody></table>
</div>
</aside>
</div>
</section>
</main>
<svg class="marks" viewBox="0 0 1913 310" aria-hidden="true">
<g fill="none" stroke="#fe0000" stroke-width="3"><rect x="209.500" y="167.500" width="171" height="57"/><rect x="1030.500" y="167.500" width="360" height="63"/><rect x="1409.500" y="135.500" width="499" height="165"/><path d="M719 150L962 44" stroke-linecap="round"/></g>
<path d="M974 39l-11 10-4-9z" fill="#fe0000"/>
</svg>
</body>
</html>
```
FILE: styles.css
```css
:root {
  --cream: #f5f2dd;
  --paper: #fffbf0;
  --line: #b3a97f;
  --brown: #594304;
}
* { box-sizing: border-box; }
body {
  position: relative;
  margin: 0;
  background: #fff;
  color: #000;
  font: 11px/14px "Liberation Sans", Arial, sans-serif;
}
button {
  margin: 0;
  padding: 0;
  border: 0;
  background: none;
  color: inherit;
  font: inherit;
}
.sprite { position: absolute; width: 0; height: 0; }
.app { background: var(--cream); padding-top: 3px; }

.panel-title {
  display: flex;
  align-items: center;
  justify-content: space-between;
  height: 17px;
  background: #b1b1b1;
  color: #5c5c5c;
  font-weight: bold;
  font-size: 12px;
}
.pin { width: 8px; height: 10px; margin-right: 4px; }
.pin svg, .spinner svg, .win-buttons svg, .combo svg { display: block; }

.tools-row {
  display: flex;
  justify-content: space-between;
  height: 25px;
  background: var(--paper);
}
.tools { display: flex; align-items: flex-start; }
.tools .ico, .commands .ico { height: 24px; }
.ico {
  flex: none;
  display: flex;
  align-items: center;
  justify-content: center;
  width: 23px;
  height: 23px;
}
.ico svg, .i16 { flex: none; width: 16px; height: 16px; overflow: visible; }
.ico.first { width: 18px; justify-content: flex-start; }
.tools .ico.first svg { margin-left: -3px; }
.ico.pressed { border: 1px solid #000; background: #eee6d0; }
.sep {
  flex: none;
  width: 1px;
  height: 18px;
  margin: 0 2px;
  background: #cfc9ab;
}
.tools .sep { margin-top: 3px; }
.sep.thin { margin: 0; }
.glyph { font: bold 9px "Liberation Sans", Arial, sans-serif; }
.expr { font: italic bold 13px "Liberation Serif", serif; }
.ab { font: 8px "Liberation Sans", Arial, sans-serif; }

.spinner {
  display: flex;
  flex-direction: column;
  gap: 2px;
  width: 15px;
  border-left: 1px solid var(--line);
}
.spinner button {
  flex: 1;
  display: grid;
  place-items: center;
  background: var(--cream);
  border-bottom: 1px solid #d4ceb0;
}
.spinner svg { width: 8px; height: 5px; }

.window {
  margin-top: 4px;
  border-top: 2px solid #77777a;
  border-right: 1px solid #b8b8b8;
}
.window-title {
  display: flex;
  align-items: center;
  height: 19px;
  border-top: 1px solid #fff;
  border-bottom: 1px solid #77777a;
  background: #cbcbcb;
}
.window-title .i16 { margin-left: -3px; }
h1 { flex: 1; margin: 0 0 0 4px; color: #2c2c2c; font-size: 12px; line-height: 16px; }
.win-buttons { display: flex; gap: 9px; margin-right: 3px; }
.win-buttons svg { width: 12px; height: 12px; }

.commands {
  display: flex;
  align-items: center;
  height: 25px;
  border-bottom: 1px solid var(--line);
  color: var(--brown);
}
.commands .ico.first { width: 21px; }
.cmd { padding: 0 7px 0 6px; white-space: nowrap; }
.cmd + .sep + .ico { margin-left: 2px; }

.workspace {
  display: grid;
  grid-template-columns: minmax(0, 1394fr) minmax(0, 518fr);
  height: 612px;
  background: var(--paper);
}
.left, .right { display: flex; flex-direction: column; min-height: 0; }
.options {
  display: flex;
  align-items: center;
  height: 32px;
  margin-top: 4px;
  padding-left: 2px;
  color: #4a3a10;
}
.ticks { display: flex; gap: 10px; margin-left: 2px; }
.tick { display: flex; align-items: center; gap: 3px; white-space: nowrap; }
.tick input {
  appearance: none;
  display: grid;
  place-items: center;
  width: 13px;
  height: 13px;
  margin: 0;
  border: 1px solid #9d9470;
  border-radius: 2px;
  background: #fff;
}
.tick input:checked::after {
  content: "";
  width: 9px;
  height: 9px;
  background: #333;
  clip-path: polygon(0 40%, 35% 65%, 100% 0, 100% 35%, 40% 100%, 0 70%);
}
.filters {
  display: flex;
  align-items: center;
  height: 20px;
  margin-top: -3px;
  padding-left: 2px;
  color: var(--brown);
}
.filters label { width: 38px; }
.filters .wide + label { width: 80px; margin-left: 18px; }
.combo {
  display: flex;
  width: 236px;
  height: 19px;
  overflow: hidden;
  border: 1px solid var(--line);
  border-radius: 3px;
  background: #fff;
}
.combo.wide { width: 264px; }
.combo input { flex: 1; min-width: 0; padding: 0 3px; border: 0; font: inherit; background: none; }
.combo button {
  display: grid;
  place-items: center;
  width: 15px;
  border-left: 1px solid #dcd6b8;
  background: var(--cream);
}
.combo svg { width: 9px; height: 9px; }

.tabs { display: flex; gap: 7px; height: 19px; margin: 2px 0 -1px 2px; z-index: 1; }
.tab {
  padding: 0 9px;
  border: 1px solid #c9c2a2;
  border-bottom-color: var(--line);
  border-radius: 5px 5px 0 0;
  background: #e9e3c8;
  color: #a69b76;
}
.tab.active {
  padding: 0 8px;
  border-color: var(--line);
  border-top: 2px solid #f3cd82;
  border-bottom: 0;
  background: var(--paper);
  color: var(--brown);
}
.tab-page {
  flex: 1;
  display: flex;
  min-height: 0;
  margin-left: 2px;
  padding: 6px 6px 0;
  border: 1px solid var(--line);
  border-bottom: 0;
}
.table-box { flex: 1; min-width: 0; overflow: hidden; border: 1px solid var(--line); background: #fff; }
.table-box.open { border-bottom: 0; }
.table-box.sets { flex: none; height: 269px; }
.right { gap: 5px; padding: 55px 7px 0 5px; }

table { width: 100%; table-layout: fixed; border-spacing: 0; }
th, td {
  height: 19px;
  padding: 0 0 0 4px;
  overflow: hidden;
  border: solid var(--line);
  border-width: 0 1px 1px 0;
  text-align: left;
  white-space: nowrap;
  font-weight: normal;
}
th { height: 21px; background: var(--cream); color: var(--brown); }
th:last-child, td:last-child { border-right: 0; }
.current { background: #cfccb8; color: #3c2f0a; }
.num { padding-right: 4px; text-align: right; }
.more { font-size: 6px; }
.main-table tbody { background: #ebffeb; }
.selected { background: #4f68c4; color: #fff; }
.main-table .selected { outline: 1px dotted #c9b25c; outline-offset: -1px; }
.mark { display: block; width: 9px; height: 8px; margin-left: 3px; }
.row-icon { width: 11px; height: 11px; margin: 0 7px 0 2px; vertical-align: -1px; }
.c-db { width: 62px; }
.c-name { width: 150px; }
.c-size { width: 93px; }
.c-num { width: 50px; }
.c-rows { width: 68px; }
.c-fields { width: 48px; }

.marks { position: absolute; top: 0; left: 0; width: 1913px; height: 310px; pointer-events: none; z-index: 2; }
```
